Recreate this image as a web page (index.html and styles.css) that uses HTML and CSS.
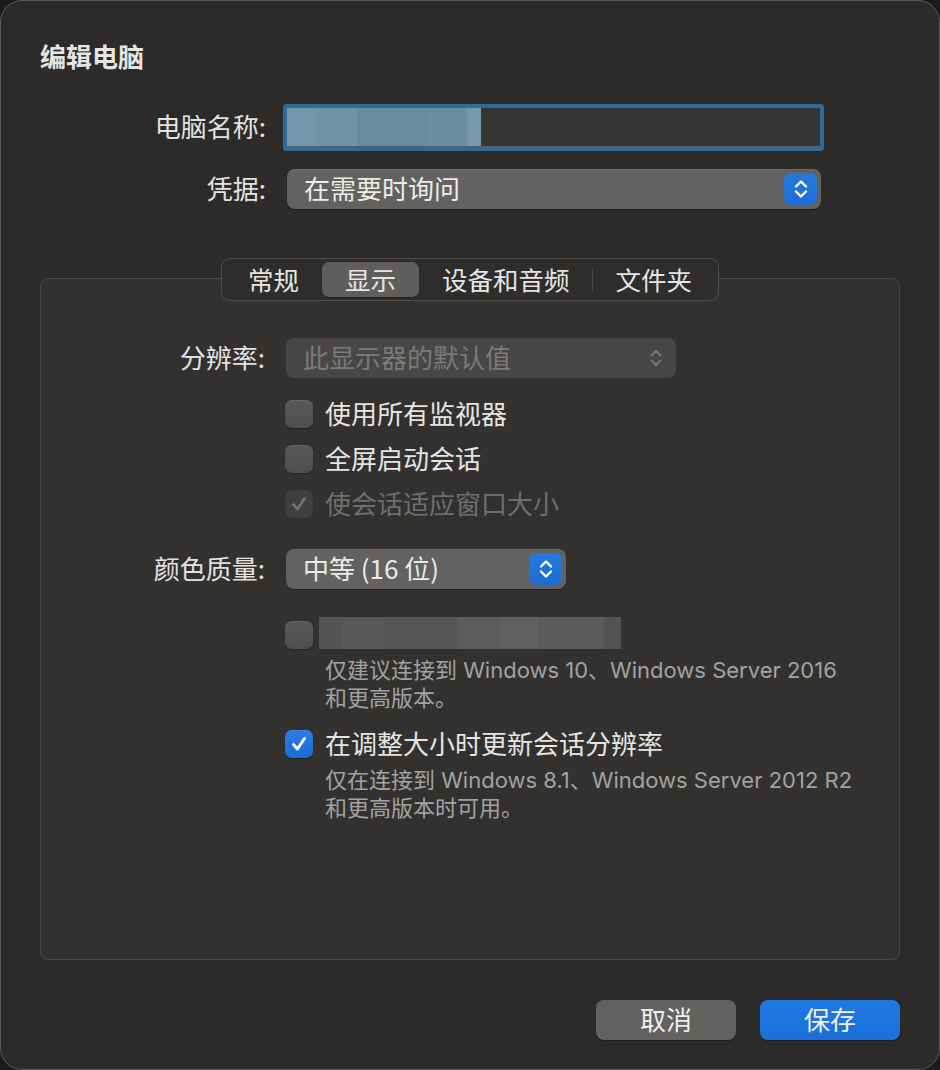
FILE: index.html
```html
<!DOCTYPE html>
<html lang="zh-CN">
<head>
<meta charset="utf-8">
<title>编辑电脑</title>
<link rel="stylesheet" href="styles.css">
</head>
<body>
<div class="window">
  <div class="title">编辑电脑</div>

  <div class="form-row row-name">
    <div class="label">电脑名称:</div>
    <div class="textfield"><div class="blur blur-name"></div></div>
  </div>

  <div class="form-row row-cred">
    <div class="label">凭据:</div>
    <div class="popup popup-wide">
      <span class="popup-text">在需要时询问</span>
      <span class="stepper">
        <svg width="18" height="24" viewBox="0 0 18 24"><path d="M4 9.5 L9 4.5 L14 9.5 M4 14.5 L9 19.5 L14 14.5" fill="none" stroke="#fff" stroke-width="2.4" stroke-linecap="round" stroke-linejoin="round"/></svg>
      </span>
    </div>
  </div>

  <div class="tabs-wrap">
    <div class="tabs">
      <div class="tab">常规</div>
      <div class="tab selected">显示</div>
      <div class="tab sep-right">设备和音频</div>
      <div class="tab">文件夹</div>
    </div>
  </div>

  <div class="group">
    <div class="form-row row-res">
      <div class="label">分辨率:</div>
      <div class="popup popup-res disabled">
        <span class="popup-text">此显示器的默认值</span>
        <span class="stepper-plain">
          <svg width="18" height="24" viewBox="0 0 18 24"><path d="M4.5 9.5 L9 5 L13.5 9.5 M4.5 14.5 L9 19 L13.5 14.5" fill="none" stroke="#7a7978" stroke-width="2" stroke-linecap="round" stroke-linejoin="round"/></svg>
        </span>
      </div>
    </div>

    <div class="checks">
      <div class="check-row"><span class="box"></span><span class="check-label">使用所有监视器</span></div>
      <div class="check-row"><span class="box"></span><span class="check-label">全屏启动会话</span></div>
      <div class="check-row dim"><span class="box box-dim">
        <svg width="20" height="20" viewBox="0 0 20 20"><path d="M4.5 10.5 L8.5 15 L15.5 4.5" fill="none" stroke="#777675" stroke-width="2.6" stroke-linecap="round" stroke-linejoin="round"/></svg>
      </span><span class="check-label">使会话适应窗口大小</span></div>
    </div>

    <div class="form-row row-color">
      <div class="label">颜色质量:</div>
      <div class="popup popup-color">
        <span class="popup-text">中等 (16 位)</span>
        <span class="stepper">
          <svg width="18" height="24" viewBox="0 0 18 24"><path d="M4 9.5 L9 4.5 L14 9.5 M4 14.5 L9 19.5 L14 14.5" fill="none" stroke="#fff" stroke-width="2.4" stroke-linecap="round" stroke-linejoin="round"/></svg>
        </span>
      </div>
    </div>

    <div class="option">
      <div class="check-row blur-row"><span class="box"></span><span class="blur blur-label"></span></div>
      <div class="desc">仅建议连接到 Windows 10、Windows Server 2016<br>和更高版本。</div>
    </div>

    <div class="option option-2">
      <div class="check-row"><span class="box box-on">
        <svg width="20" height="20" viewBox="0 0 20 20"><path d="M4.5 10.5 L8.5 15 L15.5 4.5" fill="none" stroke="#fff" stroke-width="2.8" stroke-linecap="round" stroke-linejoin="round"/></svg>
      </span><span class="check-label">在调整大小时更新会话分辨率</span></div>
      <div class="desc">仅在连接到 Windows 8.1、Windows Server 2012 R2<br>和更高版本时可用。</div>
    </div>
  </div>

  <div class="buttons">
    <button class="btn btn-cancel">取消</button>
    <button class="btn btn-save">保存</button>
  </div>
</div>
</body>
</html>
```

FILE: styles.css
```css
html, body {
  margin: 0;
  padding: 0;
  background: #1b1b1b;
}

body {
  width: 940px;
  height: 1070px;
  overflow: hidden;
  font-family: "Inter", "Noto Sans CJK SC", sans-serif;
  color: #e3e2e1;
}

.window {
  box-sizing: border-box;
  width: 940px;
  height: 1070px;
  border: 1px solid #5c5b5a;
  border-radius: 22px;
  background: #2c2b2a;
  padding: 41px 39px 0 39px;
  display: flex;
  flex-direction: column;
}

.title {
  font-size: 26px;
  font-weight: 700;
  line-height: 28px;
  height: 28px;
  color: #e6e5e4;
  font-family: "Noto Sans CJK SC", sans-serif;
}

.form-row {
  display: grid;
  grid-template-columns: 226px auto;
  column-gap: 21px;
  align-items: center;
}

.label {
  text-align: right;
  font-size: 26px;
  line-height: 30px;
  padding-bottom: 3px;
  color: #e3e2e1;
  font-family: "Noto Sans CJK SC", sans-serif;
}

.row-name {
  margin-top: 37px;
  height: 40px;
}

.textfield {
  width: 533px;
  height: 39px;
  background: #363534;
  border-bottom: 1px solid #50606c;
  box-sizing: border-box;
  border-radius: 1px;
  box-shadow: 0 0 0 4px #2f6a98;
  display: flex;
}

.blur-name {
  width: 194px;
  height: 100%;
  background: linear-gradient(90deg, #7497ab 0 30px, #7193a8 30px 70px, #698a9e 70px 140px, #6b8da2 140px 180px, #7699ad 180px 194px);
}

.row-cred {
  margin-top: 22px;
  height: 40px;
}

.popup {
  box-sizing: border-box;
  height: 40px;
  border-radius: 8px;
  background: #636261;
  box-shadow: 0 1px 1px rgba(0,0,0,0.35), inset 0 1px 0 rgba(255,255,255,0.05);
  display: flex;
  align-items: center;
  justify-content: space-between;
  padding: 0 4px 0 17px;
}

.popup-text {
  font-size: 26px;
  line-height: 30px;
  padding-bottom: 3px;
  color: #ecebea;
  font-family: "Noto Sans CJK SC", sans-serif;
}

.popup-wide { width: 534px; }

.stepper {
  width: 33px;
  height: 32px;
  border-radius: 7px;
  background: linear-gradient(#2479df, #1c6dd2);
  display: flex;
  align-items: center;
  justify-content: center;
}

.stepper-plain {
  width: 33px;
  height: 32px;
  display: flex;
  align-items: center;
  justify-content: center;
}

.tabs-wrap {
  margin-top: 49px;
  display: flex;
  justify-content: center;
  position: relative;
  z-index: 1;
}

.tabs {
  box-sizing: border-box;
  height: 43px;
  border: 1px solid #4f4e4d;
  border-radius: 9px;
  background: #2e2d2c;
  padding: 3px;
  display: flex;
}

.tab {
  position: relative;
  padding: 0 23px 2px;
  border-radius: 7px;
  font-size: 25.5px;
  line-height: 33px;
  color: #e6e5e4;
  font-family: "Noto Sans CJK SC", sans-serif;
}

.tab.selected {
  background: #5f5e5d;
  box-shadow: 0 1px 1px rgba(0,0,0,0.3);
}

.tab.sep-right::after {
  content: "";
  position: absolute;
  right: 0;
  top: 7px;
  width: 1px;
  height: 22px;
  background: #4b4a49;
}

.group {
  box-sizing: border-box;
  margin-top: -23px;
  height: 682px;
  border: 1px solid #484746;
  border-radius: 8px;
  background: #323130;
  padding-top: 59px;
  display: flex;
  flex-direction: column;
}

.group .form-row {
  grid-template-columns: 224px auto;
}

.row-res { height: 40px; }

.popup-res {
  width: 390px;
  background: #484746;
  box-shadow: none;
}

.popup.disabled .popup-text { color: #7b7a79; }

.checks {
  margin-top: 22px;
  margin-left: 244px;
  display: flex;
  flex-direction: column;
  gap: 17px;
}

.check-row {
  display: flex;
  align-items: center;
  gap: 12px;
  height: 28px;
}

.box {
  box-sizing: border-box;
  width: 28px;
  height: 28px;
  border-radius: 7px;
  background: linear-gradient(#5a5958, #4f4e4d);
  box-shadow: inset 0 1px 0 rgba(255,255,255,0.08), 0 1px 1px rgba(0,0,0,0.3);
  display: flex;
  align-items: center;
  justify-content: center;
  flex: none;
}

.box-dim {
  background: #403f3e;
  box-shadow: none;
}

.box-on {
  background: linear-gradient(#2a7de2, #1c6dd2);
}

.check-label {
  font-size: 26px;
  line-height: 30px;
  padding-bottom: 3px;
  color: #e6e5e4;
  font-family: "Noto Sans CJK SC", sans-serif;
}

.dim .check-label { color: #6f6e6d; }

.row-color {
  margin-top: 31px;
  height: 40px;
}

.popup-color { width: 280px; }

.option {
  margin-left: 244px;
  margin-top: 28px;
  display: flex;
  flex-direction: column;
}

.blur-row {
  height: 32px;
  align-items: flex-end;
  gap: 6px;
}

.blur-label {
  width: 302px;
  height: 32px;
  background: linear-gradient(90deg, #555453 0 24px, #5a5958 24px 64px, #575655 64px 140px, #5d5c5b 140px 180px, #616060 180px 220px, #5b5a59 220px 285px, #545352 285px 302px);
}

.desc {
  margin-top: 8px;
  margin-left: 40px;
  font-size: 22px;
  line-height: 27.5px;
  color: #a3a2a1;
}

.option-2 {
  margin-top: 18px;
}

.option-2 .desc {
  margin-top: 9px;
}

.buttons {
  margin-top: 40px;
  display: flex;
  justify-content: flex-end;
  gap: 24px;
}

.btn {
  width: 140px;
  height: 40px;
  border: none;
  border-radius: 8px;
  font-size: 26px;
  line-height: 30px;
  padding: 0 0 3px;
  font-family: "Noto Sans CJK SC", sans-serif;
  color: #f0efee;
  box-shadow: 0 1px 1px rgba(0,0,0,0.35);
}

.btn-cancel { background: #636261; }

.btn-save { background: linear-gradient(#2079e3, #1a6fd8); }
```
